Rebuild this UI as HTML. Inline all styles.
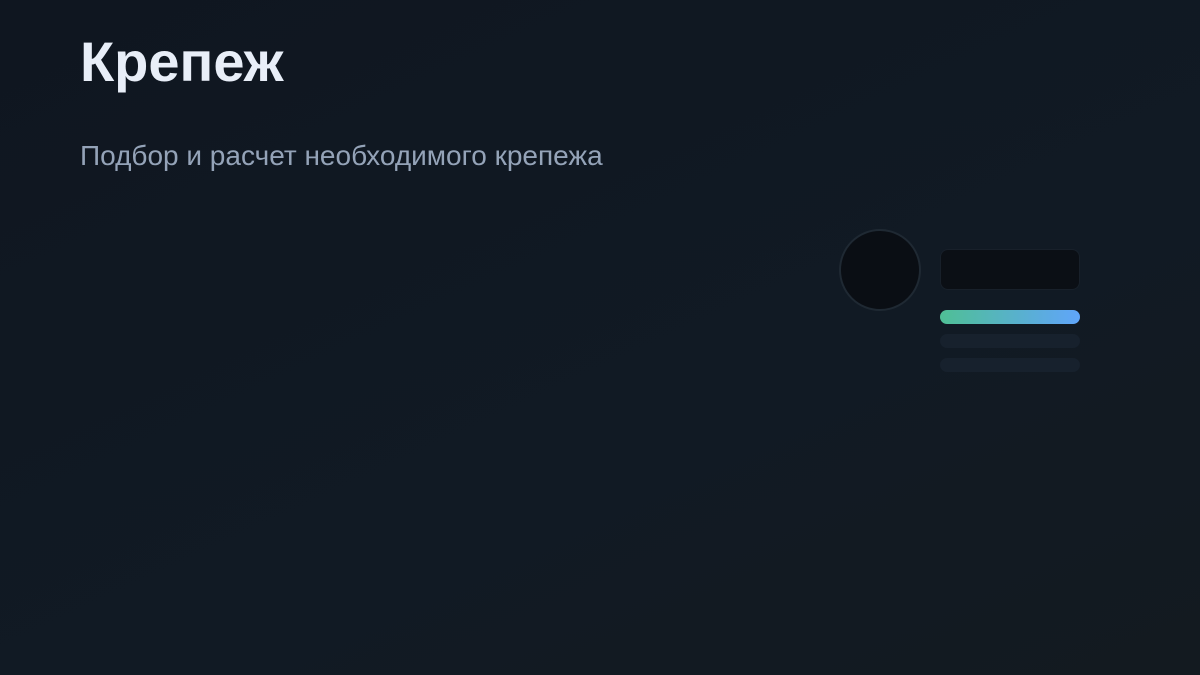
<!DOCTYPE html>
<html><head><meta charset="utf-8"><style>
html,body{margin:0;padding:0;}
body{width:1200px;height:675px;overflow:hidden;position:relative;background:linear-gradient(155deg,#0f1620 0%,#111a24 60%,#131a20 100%);font-family:"Liberation Sans",sans-serif;}
h1{position:absolute;left:80px;top:27px;margin:0;font-size:56px;font-weight:bold;color:#e8eef8;line-height:70px;}
p{position:absolute;left:80px;top:138px;margin:0;font-size:28px;color:#94a3b8;line-height:36px;}
.c{position:absolute;left:839px;top:229px;width:78px;height:78px;border-radius:50%;background:#0a0e14;border:2px solid #1f2933;}
.r{position:absolute;left:940px;top:249px;width:138px;height:39px;border-radius:8px;background:#0b0f15;border:1px solid #18202a;}
.g{position:absolute;left:940px;top:310px;width:140px;height:14px;border-radius:7px;background:linear-gradient(90deg,#4fbf95,#60a5fa);}
.b{position:absolute;left:940px;width:140px;height:14px;border-radius:7px;background:#17212d;}
</style></head><body>
<h1>Крепеж</h1>
<p>Подбор и расчет необходимого крепежа</p>
<div class="c"></div><div class="r"></div><div class="g"></div>
<div class="b" style="top:334px"></div><div class="b" style="top:358px"></div>
</body></html>
